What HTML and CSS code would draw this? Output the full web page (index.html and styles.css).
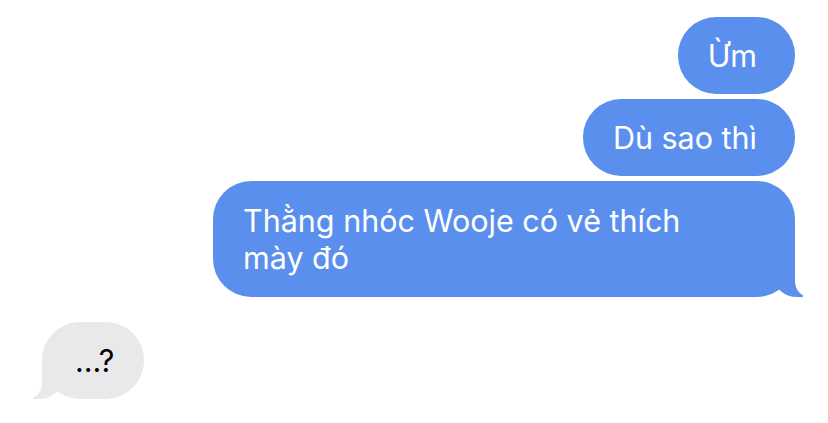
FILE: index.html
```html
<!DOCTYPE html>
<html lang="vi">

<head>
    <meta charset="UTF-8">
    <meta name="viewport" content="width=device-width, initial-scale=1.0">
    <title>Tin nhắn</title>
    <link rel="stylesheet" href="styles.css">
</head>

<body>
    <div class="thread">
        <div class="msg sent">Ừm</div>
        <div class="msg sent">Dù sao thì</div>
        <div class="msg sent tail wide">Thằng nhóc Wooje có vẻ thích<br>mày đó</div>

        <div class="msg received tail">...?</div>
    </div>
</body>

</html>
```

FILE: styles.css
```css
body {
    margin: 0;
    background-color: #fff;
    font-family: "Inter", "Liberation Sans", sans-serif;
}

.thread {
    display: flex;
    flex-direction: column;
    padding: 17px 33px 0 42px;
    gap: 5px;
}

.msg {
    position: relative;
    font-size: 30.5px;
    line-height: 37px;
    padding: 20px 30px;
    border-radius: 38px;
    box-sizing: border-box;
}

.sent {
    align-self: flex-end;
    color: #fff;
    background-color: #5b8fee;
    padding-right: 38px;
}

.wide {
    width: 582px;
    padding-top: 21px;
    padding-bottom: 21px;
}

.received {
    align-self: flex-start;
    margin-top: 20px;
    color: #000;
    background-color: #e9e9eb;
    padding-left: 33px;
}

/* the little tail under the last bubble */
.tail::before,
.tail::after {
    content: "";
    position: absolute;
    bottom: 0;
    height: 38px;
}

.sent.tail::before {
    right: -8px;
    width: 28px;
    background-color: #5b8fee;
    border-bottom-left-radius: 22px 18px;
}

.sent.tail::after {
    right: -30px;
    width: 30px;
    background-color: #fff;
    border-bottom-left-radius: 14px 16px;
}

.received.tail::before {
    left: -9px;
    width: 28px;
    background-color: #e9e9eb;
    border-bottom-right-radius: 22px 18px;
}

.received.tail::after {
    left: -30px;
    width: 30px;
    background-color: #fff;
    border-bottom-right-radius: 14px 16px;
}
```
